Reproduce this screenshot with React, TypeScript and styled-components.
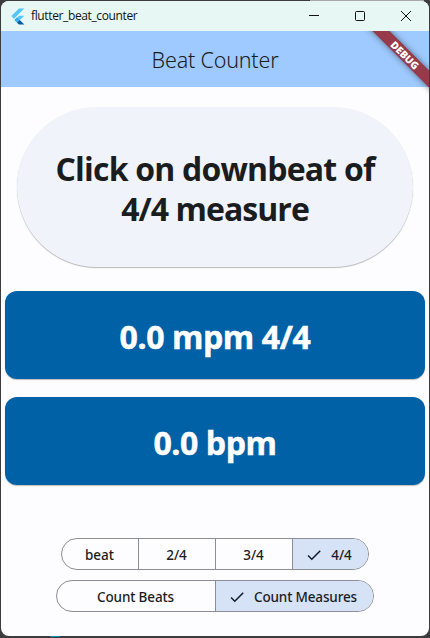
import React from "react";
import styled, { createGlobalStyle } from "styled-components";

const Global = createGlobalStyle`
  * { box-sizing: border-box; }
  html, body, #root { height: 100%; margin: 0; }
  body { overflow: hidden; font-family: "Segoe UI", "Open Sans", "Noto Sans", sans-serif; }
  button { font: inherit; border: 0; padding: 0; margin: 0; background: none; color: inherit; }
`;

const Desktop = styled.div`
  width: 430px;
  height: 638px;
  padding: 1px 1px 2px;
  background:
    linear-gradient(#1687a3, #1687a3) 50px 636px / 10px 1px no-repeat,
    linear-gradient(90deg, transparent 310px, #a8a8aa 310px, #a8a8aa 424px, transparent 424px) 0 0 / 430px 1px no-repeat,
    #3c3c3f;
`;

const AppWindow = styled.div`
  position: relative;
  display: flex;
  flex-direction: column;
  width: 428px;
  height: 635px;
  overflow: hidden;
  border-radius: 8px;
  background: #fdfcff;
  color: #1a1c1e;
`;

const TitleBar = styled.header`
  display: flex;
  align-items: center;
  flex: 0 0 30px;
  padding-left: 9px;
  background: #e7f7f4;
  color: #111;
`;

const WindowTitle = styled.span`
  flex: 1;
  margin-left: 6px;
  font-size: 12px;
  line-height: 16px;
  letter-spacing: -0.37px;
`;

const Caption = styled.button`
  display: grid;
  place-items: center;
  width: 46px;
  height: 30px;
`;

const AppBar = styled.div`
  display: grid;
  place-items: center;
  flex: 0 0 56px;
  background: #9fcaff;
`;

const Heading = styled.h1`
  margin: 1px 0 0;
  font-family: "Segoe UI", "Noto Sans", sans-serif;
  font-size: 21.5px;
  font-weight: 350;
  line-height: 28px;
  letter-spacing: -0.2px;
`;

const BannerClip = styled.div`
  position: absolute;
  top: 30px;
  right: 0;
  width: 80px;
  height: 80px;
  overflow: hidden;
  pointer-events: none;
`;

const Banner = styled.div`
  position: absolute;
  top: 17.5px;
  left: 4px;
  width: 104px;
  height: 12px;
  transform: rotate(45deg);
  background: #973a49;
  box-shadow: 0 0 6px rgba(0, 0, 0, 0.5);
  color: #fff;
  font-size: 10.2px;
  font-weight: 800;
  line-height: 12px;
  text-align: center;
  letter-spacing: 0;
`;

const Body = styled.main`
  display: flex;
  flex-direction: column;
  flex: 1;
  padding: 20px 4px 24px;
`;

const TapPad = styled.button`
  flex: 0 0 160px;
  margin: 0 12px 24px;
  padding-top: 3px;
  border-radius: 80px;
  background: #f0f3fa;
  box-shadow: 0 1px 1px rgba(0, 0, 0, 0.27);
`;

const PadLabel = styled.span<{ $spacing: number }>`
  display: block;
  font-size: 32px;
  font-weight: 700;
  line-height: 40px;
  white-space: nowrap;
  letter-spacing: ${(p) => p.$spacing}px;
`;

const Readout = styled.section<{ $spacing: number }>`
  display: grid;
  place-items: center;
  flex: 0 0 88px;
  margin-bottom: 18px;
  padding-top: 4px;
  border-radius: 12px;
  background: #0061a6;
  box-shadow: 0 1px 1px rgba(0, 0, 0, 0.25);
  color: #fff;
  font-size: 32px;
  font-weight: 700;
  line-height: 40px;
  letter-spacing: ${(p) => p.$spacing}px;
  -webkit-text-stroke: 0.5px #fff;
`;

const Controls = styled.div`
  display: flex;
  flex-direction: column;
  align-items: center;
  gap: 10px;
  margin-top: auto;
`;

const SegmentGroup = styled.div`
  display: flex;
  height: 32px;
  overflow: hidden;
  border: 1px solid #8b8e96;
  border-radius: 16px;
`;

const SegmentButton = styled.button<{ $width: number; $selected?: boolean }>`
  display: flex;
  align-items: center;
  justify-content: center;
  gap: 8px;
  width: ${(p) => p.$width}px;
  padding: 2px ${(p) => (p.$selected ? 4 : 1)}px 0 0;
  background: ${(p) => (p.$selected ? "#d6e3f7" : "transparent")};
  font-family: "Segoe UI", "Noto Sans", sans-serif;
  font-size: 13.5px;
  font-weight: 500;
  line-height: 20px;
  white-space: nowrap;
  & + & { border-left: 1px solid #8b8e96; }
`;

const SegmentText = styled.span<{ $spacing?: number }>`
  letter-spacing: ${(p) => p.$spacing ?? 0}px;
`;

const FlutterLogo = () => (
  <svg width="15" height="17" viewBox="0 0 15 17">
    <path d="M9 0.5H14.3L4 10.8L1.3 8.1Z" fill="#54c5f8" />
    <path d="M9 7.7H14.3L9.7 12.3L7 9.7Z" fill="#54c5f8" />
    <path d="M4.3 12L7 9.3L9.7 12L7 14.7Z" fill="#35aee9" />
    <path d="M7 14.7L9.7 12L14.3 16.5H9Z" fill="#075b9d" />
  </svg>
);

const Check = () => (
  <svg width="18" height="18" viewBox="0 0 24 24">
    <path d="M9 16.17 4.83 12l-1.42 1.41L9 19 21 7l-1.41-1.41z" fill="#101c2b" />
  </svg>
);

export default function App() {
  return (
    <>
      <Global />
      <Desktop>
        <AppWindow>
          <TitleBar>
            <FlutterLogo />
            <WindowTitle>flutter_beat_counter</WindowTitle>
            <Caption aria-label="Minimize">
              <svg width="10" height="10"><path d="M0 4.5H10" stroke="#111" /></svg>
            </Caption>
            <Caption aria-label="Maximize">
              <svg width="10" height="10"><rect x=".5" y=".5" width="9" height="9" rx="1" fill="none" stroke="#111" /></svg>
            </Caption>
            <Caption aria-label="Close">
              <svg width="10" height="10"><path d="M0 0L10 10M10 0L0 10" stroke="#111" /></svg>
            </Caption>
          </TitleBar>
          <AppBar><Heading>Beat Counter</Heading></AppBar>
          <Body>
            <TapPad>
              <PadLabel $spacing={-0.8}>Click on downbeat of</PadLabel>
              <PadLabel $spacing={-0.95}>4/4 measure</PadLabel>
            </TapPad>
            <Readout $spacing={-0.4}>0.0 mpm 4/4</Readout>
            <Readout $spacing={-0.4}>0.0 bpm</Readout>
            <Controls>
              <SegmentGroup>
                <SegmentButton $width={76}><SegmentText>beat</SegmentText></SegmentButton>
                <SegmentButton $width={77}><SegmentText>2/4</SegmentText></SegmentButton>
                <SegmentButton $width={77}><SegmentText>3/4</SegmentText></SegmentButton>
                <SegmentButton $width={76} $selected><Check /><SegmentText>4/4</SegmentText></SegmentButton>
              </SegmentGroup>
              <SegmentGroup>
                <SegmentButton $width={158}><SegmentText $spacing={-0.15}>Count Beats</SegmentText></SegmentButton>
                <SegmentButton $width={158} $selected><Check /><SegmentText $spacing={-0.15}>Count Measures</SegmentText></SegmentButton>
              </SegmentGroup>
            </Controls>
          </Body>
          <BannerClip><Banner>DEBUG</Banner></BannerClip>
        </AppWindow>
      </Desktop>
    </>
  );
}
